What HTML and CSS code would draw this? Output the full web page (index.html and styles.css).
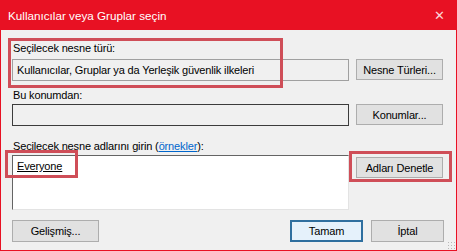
FILE: index.html
```html
<!DOCTYPE html>
<html lang="tr">
<head>
    <meta charset="utf-8">
    <title>Kullanıcılar veya Gruplar seçin</title>
    <link rel="stylesheet" href="styles.css">
</head>
<body>
    <div class="window">
        <div class="titlebar">
            <span class="title">Kullanıcılar veya Gruplar seçin</span>
            <span class="close">&#x2715;</span>
        </div>
        <div class="client">
            <div class="form">
                <label class="label">Seçilecek nesne türü:</label>
                <div class="field readonly">Kullanıcılar, Gruplar ya da Yerleşik güvenlik ilkeleri</div>
                <button type="button" class="btn">Nesne Türleri...</button>

                <label class="label second">Bu konumdan:</label>
                <div class="field dark"></div>
                <button type="button" class="btn">Konumlar...</button>

                <label class="label third">Seçilecek nesne adlarını girin (<a href="#">örnekler</a>):</label>
                <div class="names"><u>Everyone</u></div>
                <div class="side">
                    <button type="button" class="btn">Adları Denetle</button>
                </div>
            </div>
            <div class="footer">
                <button type="button" class="btn">Gelişmiş...</button>
                <div class="right">
                    <button type="button" class="btn default">Tamam</button>
                    <button type="button" class="btn">İptal</button>
                </div>
            </div>
            <div class="grip"></div>
        </div>
        <!-- kırmızı işaret kutuları -->
        <div class="mark mark-type"></div>
        <div class="mark mark-name"></div>
        <div class="mark mark-check"></div>
    </div>
</body>
</html>
```

FILE: styles.css
```css
* {
    margin: 0;
    padding: 0;
    box-sizing: border-box;
}
body {
    width: 457px;
    height: 251px;
    overflow: hidden;
    font-family: "Liberation Sans", Arial, sans-serif;
    font-size: 11px;
    letter-spacing: -0.15px;
    color: #000;
    background: #fff;
}
.window {
    position: relative;
    width: 457px;
    height: 251px;
    border: 1px solid #e81123;
    border-top: 0;
    background: #f0f0f0;
    display: flex;
    flex-direction: column;
}
.titlebar {
    height: 30px;
    margin: 0 -1px;
    background: #e81123;
    color: #fff;
    display: flex;
    align-items: center;
    justify-content: space-between;
    padding: 0 12px 0 8px;
    font-size: 11.7px;
    letter-spacing: 0;
}
.close {
    font-size: 13px;
    line-height: 1;
    color: #fbd5d8;
}
.client {
    position: relative;
    flex: 1;
    display: flex;
    flex-direction: column;
    padding: 11px 12px 0 11px;
}
.form {
    display: grid;
    grid-template-columns: 337px 87px;
    column-gap: 7px;
    align-items: start;
}
.label {
    grid-column: 1 / 3;
    display: block;
    height: 14px;
    line-height: 14px;
    margin-bottom: 4px;
    padding-left: 1px;
}
.label.second {
    margin-top: 7px;
    margin-bottom: 2px;
}
.label.third {
    margin-top: 13px;
    margin-bottom: 2px;
}
.label a {
    color: #0066cc;
}
.field {
    height: 22px;
    line-height: 20px;
    padding-left: 4px;
    border: 1px solid #a0a0a0;
    background: #f0f0f0;
    white-space: nowrap;
}
.field.dark {
    border-color: #3c3c3c;
}
.names {
    height: 55px;
    padding: 3px 4px;
    line-height: 14px;
    background: #fff;
    border-top: 1px solid #646464;
    border-left: 1px solid #646464;
    border-right: 1px solid #e3e3e3;
    border-bottom: 1px solid #e3e3e3;
}
.side {
    padding-top: 2px;
}
.btn {
    width: 87px;
    height: 21px;
    font-family: inherit;
    font-size: 11px;
    letter-spacing: -0.15px;
    color: #000;
    background: #e1e1e1;
    border: 1px solid #adadad;
}
.footer {
    display: flex;
    justify-content: space-between;
    margin-top: 10px;
}
.footer .btn {
    width: 87px;
    height: 22px;
}
.footer .right {
    display: flex;
    gap: 8px;
}
.footer .right .btn {
    width: 73px;
}
.btn.default {
    background: #e5f1fb;
    border: 2px solid #2f6f9f;
}
.grip {
    position: absolute;
    right: 1px;
    bottom: 1px;
    width: 8px;
    height: 8px;
    background: radial-gradient(circle, #b8b8b8 0.8px, transparent 1px) 0 0 / 3px 3px;
}
.mark {
    position: absolute;
    border: 3px solid #cf4e58;
}
.mark-type {
    left: 7px;
    top: 38px;
    width: 275px;
    height: 50px;
}
.mark-name {
    left: 4px;
    top: 150px;
    width: 73px;
    height: 28px;
}
.mark-check {
    left: 348px;
    top: 151px;
    width: 103px;
    height: 31px;
}
```
